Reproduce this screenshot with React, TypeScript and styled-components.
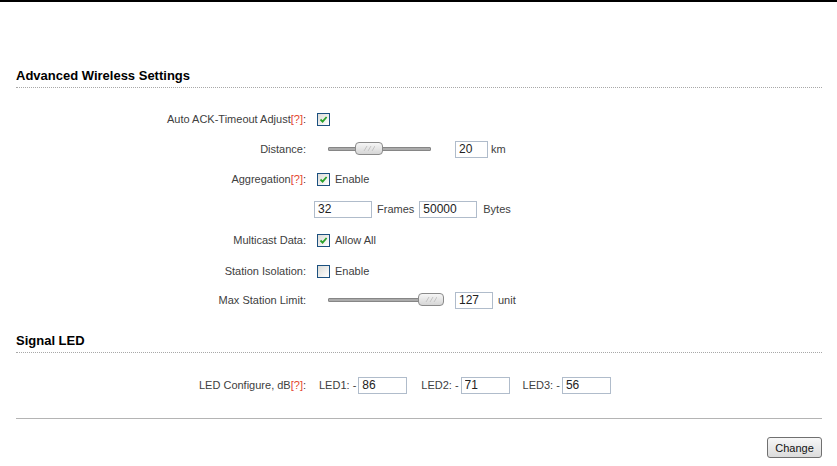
import React from "react";
import styled, { createGlobalStyle } from "styled-components";

const GlobalStyle = createGlobalStyle`
  html, body {
    margin: 0;
    padding: 0;
    background: #ffffff;
  }
  body {
    font-family: "Liberation Sans", Arial, sans-serif;
    font-size: 11px;
    color: #404040;
  }
`;

const Page = styled.div`
  width: 837px;
  box-sizing: border-box;
  border-top: 2px solid #000000;
  padding: 0 15px 0 16px;
`;

const SectionTitle = styled.h2<{ $top: number }>`
  margin: ${(p) => p.$top}px 0 0;
  padding-bottom: 3px;
  font-size: 13px;
  line-height: 16px;
  font-weight: bold;
  color: #000000;
  border-bottom: 1px dotted #a8a8a8;
`;

const Form = styled.div<{ $top: number }>`
  margin-top: ${(p) => p.$top}px;
  display: flex;
  flex-direction: column;
`;

const Row = styled.div<{ $h?: number }>`
  display: flex;
  align-items: center;
  height: ${(p) => p.$h ?? 30}px;
  gap: 8px;
`;

const Label = styled.div`
  width: 290px;
  text-align: right;
  white-space: nowrap;
  color: #404040;
`;

const Help = styled.span`
  color: #e4462e;
`;

const Controls = styled.div`
  display: flex;
  align-items: center;
  white-space: nowrap;
`;

const Box = styled.span`
  width: 13px;
  height: 13px;
  box-sizing: border-box;
  margin-left: 3px;
  border: 1px solid #1c5180;
  background: linear-gradient(135deg, #dcdcd7, #ffffff);
  display: flex;
  align-items: center;
  justify-content: center;
`;

const BoxText = styled.span`
  margin-left: 5px;
`;

const Unit = styled.span<{ $gap?: number }>`
  margin-left: ${(p) => p.$gap ?? 4}px;
`;

const TextInput = styled.input<{ $w: number; $gap?: number }>`
  width: ${(p) => p.$w}px;
  height: 17px;
  box-sizing: border-box;
  margin: 0 0 0 ${(p) => p.$gap ?? 0}px;
  padding: 0 3px;
  border: 1px solid #b0bccb;
  background: #ffffff;
  font: 12px "Liberation Sans", Arial, sans-serif;
  color: #222222;
  outline: none;
`;

const SliderBox = styled.div`
  position: relative;
  width: 127px;
  height: 14px;
  margin-left: 14px;
  display: flex;
  align-items: center;
`;

const Track = styled.div<{ $w: number }>`
  width: ${(p) => p.$w}px;
  height: 4px;
  box-sizing: border-box;
  background: #ababab;
  border: 1px solid #868686;
  border-radius: 1px;
`;

const Thumb = styled.div<{ $w: number }>`
  position: absolute;
  top: 0;
  width: ${(p) => p.$w}px;
  height: 13px;
  box-sizing: border-box;
  border: 1px solid #8a8a8a;
  border-radius: 4px;
  background: linear-gradient(#f6f6f6, #d6d6d6);
  display: flex;
  align-items: center;
  justify-content: center;
`;

const LedText = styled.span<{ $gap: number }>`
  margin-left: ${(p) => p.$gap}px;
`;

const Divider = styled.div`
  margin-top: 18px;
  border-top: 1px solid #b4b4b4;
`;

const Footer = styled.div`
  margin-top: 18px;
  display: flex;
  justify-content: flex-end;
`;

const Button = styled.button`
  width: 55px;
  height: 21px;
  padding: 0;
  border: 1px solid #707070;
  border-radius: 3px;
  background: linear-gradient(#f7f7f7, #dcdcdc);
  font: 11px "Liberation Sans", Arial, sans-serif;
  color: #111111;
`;

const Check = ({ on }: { on: boolean }) => (
  <Box>
    {on && (
      <svg width="9" height="9" viewBox="0 0 9 9">
        <path d="M1.5 4.5 L3.6 6.6 L7.6 2" fill="none" stroke="#2aa22a" strokeWidth="1.8" />
      </svg>
    )}
  </Box>
);

const Slider = ({ track, left, width }: { track: number; left: number; width: number }) => (
  <SliderBox>
    <Track $w={track} />
    <Thumb $w={width} style={{ left }}>
      <svg width="12" height="5" viewBox="0 0 12 5">
        <path d="M1 5 L4 0 M5 5 L8 0 M9 5 L12 0" stroke="#c4c4c4" strokeWidth="1" />
      </svg>
    </Thumb>
  </SliderBox>
);

export default function App() {
  return (
    <>
      <GlobalStyle />
      <Page>
        <SectionTitle $top={66}>Advanced Wireless Settings</SectionTitle>
        <Form $top={16}>
          <Row>
            <Label>
              Auto ACK-Timeout Adjust<Help>[?]</Help>:
            </Label>
            <Controls>
              <Check on />
            </Controls>
          </Row>
          <Row>
            <Label>Distance:</Label>
            <Controls>
              <Slider track={103} left={27} width={28} />
              <TextInput $w={33} defaultValue="20" />
              <Unit $gap={3}>km</Unit>
            </Controls>
          </Row>
          <Row>
            <Label>
              Aggregation<Help>[?]</Help>:
            </Label>
            <Controls>
              <Check on />
              <BoxText>Enable</BoxText>
            </Controls>
          </Row>
          <Row>
            <Label />
            <Controls>
              <TextInput $w={58} defaultValue="32" />
              <Unit $gap={5}>Frames</Unit>
              <TextInput $w={58} $gap={5} defaultValue="50000" />
              <Unit $gap={6}>Bytes</Unit>
            </Controls>
          </Row>
          <Row $h={32}>
            <Label>Multicast Data:</Label>
            <Controls>
              <Check on />
              <BoxText>Allow All</BoxText>
            </Controls>
          </Row>
          <Row>
            <Label>Station Isolation:</Label>
            <Controls>
              <Check on={false} />
              <BoxText>Enable</BoxText>
            </Controls>
          </Row>
          <Row $h={28}>
            <Label>Max Station Limit:</Label>
            <Controls>
              <Slider track={116} left={90} width={26} />
              <TextInput $w={38} defaultValue="127" />
              <Unit $gap={5}>unit</Unit>
            </Controls>
          </Row>
        </Form>

        <SectionTitle $top={19}>Signal LED</SectionTitle>
        <Form $top={17}>
          <Row>
            <Label>
              LED Configure, dB<Help>[?]</Help>:
            </Label>
            <Controls>
              <LedText $gap={5}>LED1: -</LedText>
              <TextInput $w={49} $gap={2} defaultValue="86" />
              <LedText $gap={14}>LED2: -</LedText>
              <TextInput $w={49} $gap={2} defaultValue="71" />
              <LedText $gap={13}>LED3: -</LedText>
              <TextInput $w={49} $gap={2} defaultValue="56" />
            </Controls>
          </Row>
        </Form>

        <Divider />
        <Footer>
          <Button type="button">Change</Button>
        </Footer>
      </Page>
    </>
  );
}
